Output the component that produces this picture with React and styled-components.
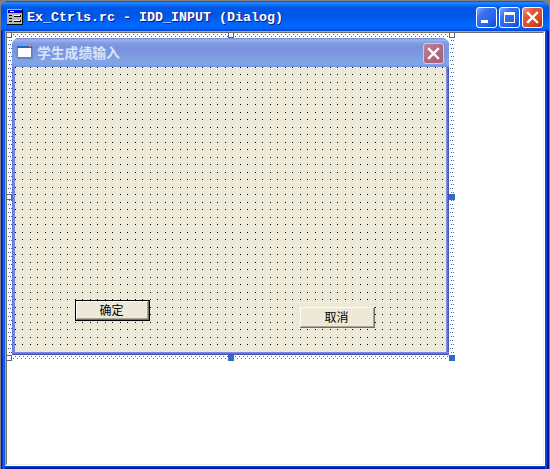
import React from 'react';
import styled, { createGlobalStyle, css } from 'styled-components';

const Global = createGlobalStyle`
  * { box-sizing: border-box; }
  body { margin: 0; background: #808080; overflow: hidden; }
`;

const Window = styled.div`
  width: 550px;
  height: 469px;
  padding: 1px 1px 0 1px;
  background: #808080;
  font-family: "Liberation Sans", "Noto Sans CJK SC", sans-serif;
`;

const Frame = styled.div`
  height: 468px;
  display: flex;
  flex-direction: column;
  padding: 0 4px 3px;
  border-radius: 8px 8px 0 0;
  overflow: hidden;
  background:
    linear-gradient(90deg, #0019cf 0 1px, #0831d9 1px 2px, #166aee 2px 3px, #0855dd 3px 4px, transparent 4px),
    linear-gradient(270deg, #00138c 0 1px, #001ea0 1px 2px, #0441d8 2px 3px, #0048f1 3px 4px, transparent 4px),
    linear-gradient(0deg, #00138c 0 1px, #0029bb 1px 2px, #0048e0 2px 3px, transparent 3px),
    #0054e3;
`;

const TitleBar = styled.header`
  height: 30px;
  flex: none;
  margin: 0 -4px;
  padding: 6px 6px 0 6px;
  display: flex;
  background: linear-gradient(180deg, #0050d0 0, #2a8aff 2px, #0a6cf5 4px, #0058e8 7px, #0054e3 12px, #005cf0 18px, #0066ff 23px, #0068ff 27px, #0050dc 29px, #003dd7 30px);
`;

const TitleText = styled.h1`
  margin: 0 0 0 4px;
  flex: 1;
  font: bold 13.33px/22px "Liberation Mono", monospace;
  color: #fff;
  text-shadow: 1px 1px 0 #0a1883;
  white-space: pre;
`;

const Controls = styled.div`
  display: flex;
  gap: 2px;
`;

const ControlButton = styled.button`
  width: 21px;
  height: 21px;
  padding: 0;
  border: 1px solid #fff;
  border-radius: 3px;
  background: ${p => p.$close
    ? 'linear-gradient(135deg, #f09a80 0, #e2593a 30%, #da4520 70%, #b93010 100%)'
    : 'linear-gradient(135deg, #86a8f8 0, #3b70ee 30%, #2462ee 70%, #1746c0 100%)'};
  svg { display: block; }
  ${p => p.$muted && css`
    border-color: #c8ccec;
    background: linear-gradient(135deg, #bd8497, #b06a80 50%, #a55f7b);
  `}
`;

const IconSlot = styled.span`
  width: 16px;
  height: 16px;
  margin-top: 2px;
  svg { display: block; }
`;

const Client = styled.main`
  flex: 1;
  border-top: 1px solid #aca899;
  border-left: 1px solid #aca899;
  border-right: 1px solid #fff;
  border-bottom: 1px solid #fff;
`;

const Canvas = styled.div`
  height: 100%;
  position: relative;
  overflow: hidden;
  background: #fff;
  border-top: 1px solid #716f64;
  border-left: 1px solid #716f64;
  border-right: 1px solid #f1efe2;
  border-bottom: 1px solid #f1efe2;
`;

const Selection = styled.div`
  width: 448px;
  height: 328px;
  padding: 5px 6px 6px 5px;
  position: relative;
`;

const Hatch = styled.svg`
  position: absolute;
  inset: 0;
`;

const Handle = styled.i`
  position: absolute;
  left: ${p => p.$x}px;
  top: ${p => p.$y}px;
  width: 6px;
  height: 6px;
  border: 1px solid #316ac5;
  background: ${p => (p.$filled ? '#316ac5' : '#fff')};
`;

const Dialog = styled.section`
  position: relative;
  width: 437px;
  height: 317px;
  display: flex;
  flex-direction: column;
  padding: 0 3px 3px;
  border-radius: 7px 7px 0 0;
  overflow: hidden;
  background:
    linear-gradient(0deg, #4b50bd 0 1px, #6670d2 1px 2px, #7b8be2 2px 3px, transparent 3px),
    linear-gradient(90deg, #6673d4 0 1px, #7587dd 1px 3px, transparent 3px),
    linear-gradient(270deg, #4b50bd 0 1px, #6670d2 1px 2px, #7b8be2 2px 3px, transparent 3px),
    #7a96df;
`;

const DialogTitle = styled.div`
  height: 29px;
  flex: none;
  margin: 0 -3px;
  padding: 5px 5px 0 5px;
  display: flex;
  background: linear-gradient(180deg, #7080d8 0, #9db4ee 2px, #829ce2 5px, #7a94df 9px, #7a96df 15px, #82a5e6 24px, #7f9fe4 27px, #7590df 29px);
`;

const DialogName = styled.h2`
  margin: 0 0 0 4px;
  flex: 1;
  font: bold 13.8px/18px "Noto Sans CJK SC", sans-serif;
  color: #d8e4f8;
`;

const FormGrid = styled.div`
  flex: 1;
  position: relative;
  background: #ece9d8;
  svg { display: block; }
`;

const PushButton = styled.button`
  position: absolute;
  left: ${p => p.$x}px;
  top: ${p => p.$y}px;
  width: 75px;
  height: 21px;
  padding: 0 2px 2px 0;
  border: 0;
  background: #ece9d8;
  color: #000;
  font: 12px/18px "Noto Sans CJK SC", sans-serif;
  box-shadow: ${p => p.$default
    ? 'inset 0 0 0 1px #000, inset -2px -2px 0 #716f64, inset 2px 2px 0 #fff, inset -3px -3px 0 #aca899'
    : 'inset -1px -1px 0 #716f64, inset 1px 1px 0 #fff, inset -2px -2px 0 #aca899'};
`;

const Cross = () => (
  <svg width="19" height="19" viewBox="0 0 19 19">
    <path d="M5 5 L14 14 M14 5 L5 14" stroke="#fff" strokeWidth="2.4" strokeLinecap="square" fill="none" />
  </svg>
);

const AppIcon = () => (
  <svg width="16" height="16" viewBox="0 0 16 16" shapeRendering="crispEdges">
    <path d="M0 0H16V16H0Z" fill="#000" />
    <path d="M0 0H15V15H0Z" fill="#b8b8b8" />
    <path d="M1 1H15V4H1Z" fill="#0000c8" />
    <path d="M3 2H7V3H3ZM7 6H13V7H7ZM7 11H13V12H7Z" fill="#fff" />
    <path d="M2 6H5V7H2ZM2 9H5V10H2ZM7 7H14V8H7ZM13 6H14V8H13ZM7 12H14V13H7ZM13 11H14V13H13ZM2 12H5V13H2Z" fill="#000" />
  </svg>
);

const FormIcon = () => (
  <svg width="16" height="16" viewBox="0 0 16 16" shapeRendering="crispEdges">
    <path d="M1 2H16V14H1Z" fill="#6f83c5" />
    <path d="M0 1H15V13H0Z" fill="#5885d0" />
    <path d="M1 3H14V12H1Z" fill="#fff" />
    <path d="M0 1H15V3H0Z" fill="#1c68c8" />
    <path d="M12 1H14V2H12Z" fill="#e8764c" />
  </svg>
);

const handles = [
  [-1, -1], [221, -1], [442, -1], [-1, 161],
  [442, 161, true], [-1, 322], [221, 322, true], [442, 322, true],
];

export default function App() {
  return (
    <Window>
      <Global />
      <Frame>
        <TitleBar>
          <IconSlot><AppIcon /></IconSlot>
          <TitleText>Ex_Ctrls.rc - IDD_INPUT (Dialog)</TitleText>
          <Controls>
            <ControlButton aria-label="Minimize">
              <svg width="19" height="19"><path d="M4 12H11V15H4Z" fill="#fff" /></svg>
            </ControlButton>
            <ControlButton aria-label="Maximize">
              <svg width="19" height="19"><path fillRule="evenodd" d="M4 4H15V15H4ZM5 7V14H14V7Z" fill="#fff" /></svg>
            </ControlButton>
            <ControlButton $close aria-label="Close"><Cross /></ControlButton>
          </Controls>
        </TitleBar>
        <Client>
          <Canvas>
            <Selection>
              <Hatch width="448" height="328" shapeRendering="crispEdges">
                <defs>
                  <pattern id="hatch-row" width="4" height="4" patternUnits="userSpaceOnUse">
                    <path d="M2 1h1v1h-1zM0 3h1v1h-1z" fill="#316ac5" />
                  </pattern>
                  <pattern id="hatch-column" width="2" height="8" patternUnits="userSpaceOnUse">
                    <path d="M1 3h1v1h-1zM0 7h1v1h-1z" fill="#316ac5" />
                  </pattern>
                </defs>
                <rect width="448" height="5" fill="url(#hatch-row)" />
                <rect y="322" width="448" height="5" fill="url(#hatch-row)" />
                <rect x="1" y="5" width="4" height="317" fill="url(#hatch-column)" />
                <rect x="443" y="5" width="4" height="317" fill="url(#hatch-column)" />
              </Hatch>
              <Dialog>
                <DialogTitle>
                  <IconSlot><FormIcon /></IconSlot>
                  <DialogName>学生成绩输入</DialogName>
                  <ControlButton $muted aria-label="Close"><Cross /></ControlButton>
                </DialogTitle>
                <FormGrid>
                  <svg width="431" height="285" shapeRendering="crispEdges">
                    <defs>
                      <pattern id="grid" width="15" height="15" patternUnits="userSpaceOnUse">
                        <path d="M0 0h1v1h-1zM7 0h1v1h-1zM0 7h1v1h-1zM7 7h1v1h-1z" />
                      </pattern>
                    </defs>
                    <rect width="431" height="285" fill="url(#grid)" />
                  </svg>
                  <PushButton $x={60} $y={233} $default>确定</PushButton>
                  <PushButton $x={285} $y={240}>取消</PushButton>
                </FormGrid>
              </Dialog>
              {handles.map(([x, y, filled]) => (
                <Handle key={`${x},${y}`} $x={x} $y={y} $filled={filled} />
              ))}
            </Selection>
          </Canvas>
        </Client>
      </Frame>
    </Window>
  );
}
